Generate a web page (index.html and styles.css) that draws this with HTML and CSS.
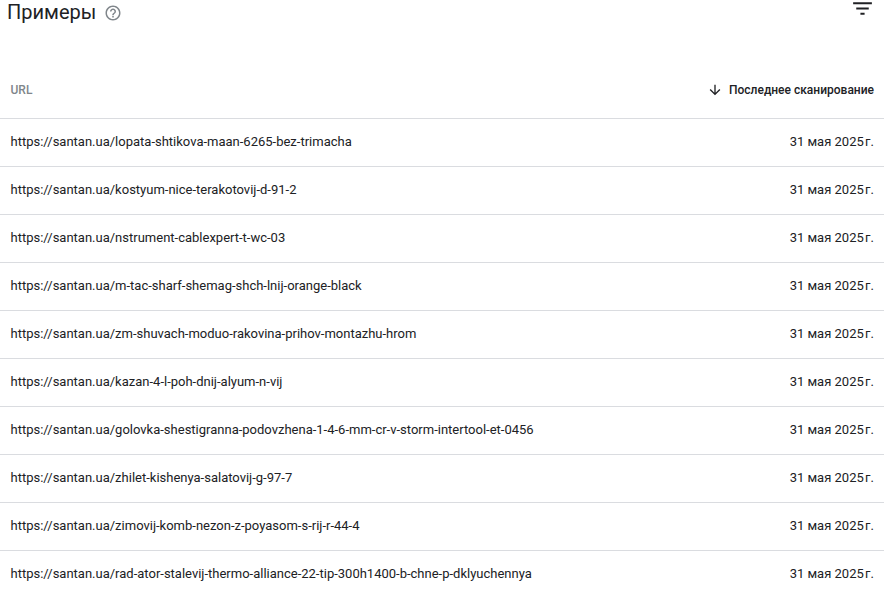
FILE: index.html
```html
<!DOCTYPE html>
<html lang="ru">
<head>
<meta charset="utf-8">
<title>Примеры</title>
<link rel="stylesheet" href="styles.css">
</head>
<body>
<header class="head">
  <div class="title-wrap">
    <h1 class="title">Примеры</h1>
    <svg class="help" viewBox="0 0 24 24" width="18" height="18"><path fill="#80868b" d="M11 18h2v-2h-2v2zm1-16C6.48 2 2 6.48 2 12s4.48 10 10 10 10-4.48 10-10S17.52 2 12 2zm0 18c-4.41 0-8-3.59-8-8s3.59-8 8-8 8 3.59 8 8-3.59 8-8 8zm0-14c-2.21 0-4 1.79-4 4h2c0-1.1.9-2 2-2s2 .9 2 2c0 2-3 1.75-3 5h2c0-2.25 3-2.5 3-5 0-2.21-1.79-4-4-4z"/></svg>
  </div>
  <svg class="filter" viewBox="0 0 24 24" width="25" height="25"><path fill="#202124" d="M10 18h4v-2h-4v2zM3 6v2h18V6H3zm3 7h12v-2H6v2z"/></svg>
</header>
<div class="table">
  <div class="row thead"><span class="url-h">URL</span><span class="sort"><svg class="arrow" viewBox="0 0 24 24" width="16" height="16"><path fill="#202124" d="M20 12l-1.41-1.41L13 16.17V4h-2v12.17l-5.58-5.59L4 12l8 8 8-8z"/></svg>Последнее сканирование</span></div>
  <div class="row"><span>https://santan.ua/lopata-shtikova-maan-6265-bez-trimacha</span><span>31 мая 2025&#8202;г.</span></div>
  <div class="row"><span>https://santan.ua/kostyum-nice-terakotovij-d-91-2</span><span>31 мая 2025&#8202;г.</span></div>
  <div class="row"><span>https://santan.ua/nstrument-cablexpert-t-wc-03</span><span>31 мая 2025&#8202;г.</span></div>
  <div class="row"><span>https://santan.ua/m-tac-sharf-shemag-shch-lnij-orange-black</span><span>31 мая 2025&#8202;г.</span></div>
  <div class="row"><span>https://santan.ua/zm-shuvach-moduo-rakovina-prihov-montazhu-hrom</span><span>31 мая 2025&#8202;г.</span></div>
  <div class="row"><span>https://santan.ua/kazan-4-l-poh-dnij-alyum-n-vij</span><span>31 мая 2025&#8202;г.</span></div>
  <div class="row"><span>https://santan.ua/golovka-shestigranna-podovzhena-1-4-6-mm-cr-v-storm-intertool-et-0456</span><span>31 мая 2025&#8202;г.</span></div>
  <div class="row"><span>https://santan.ua/zhilet-kishenya-salatovij-g-97-7</span><span>31 мая 2025&#8202;г.</span></div>
  <div class="row"><span>https://santan.ua/zimovij-komb-nezon-z-poyasom-s-rij-r-44-4</span><span>31 мая 2025&#8202;г.</span></div>
  <div class="row"><span>https://santan.ua/rad-ator-stalevij-thermo-alliance-22-tip-300h1400-b-chne-p-dklyuchennya</span><span>31 мая 2025&#8202;г.</span></div>
</div>
</body>
</html>
```
FILE: styles.css
```css
html, body { margin: 0; padding: 0; background: #fff; overflow: hidden; }
body { font-family: Roboto, "Liberation Sans", sans-serif; color: #202124; height: 592px; }
.head { display: flex; justify-content: space-between; align-items: flex-start; height: 60px; padding: 0 9px 0 7px; }
.title-wrap { display: flex; align-items: flex-start; gap: 8px; }
.title { margin: 0; font-size: 20px; font-weight: 400; line-height: 24px; }
.help { display: block; margin-top: 4px; }
.filter { display: block; margin-top: -4px; }
.table { display: flex; flex-direction: column; }
.row { display: flex; justify-content: space-between; align-items: center; height: 45px; border-bottom: 1px solid #dadce0; padding: 0 10px 2px 10.5px; font-size: 13px; }
.row:last-child { border-bottom: 0; }
.thead { height: 56px; padding-top: 2px; padding-bottom: 0; font-size: 12px; font-weight: 500; }
.url-h { color: #80868b; }
.sort { display: flex; align-items: center; gap: 6px; }
.arrow { display: block; }
```
